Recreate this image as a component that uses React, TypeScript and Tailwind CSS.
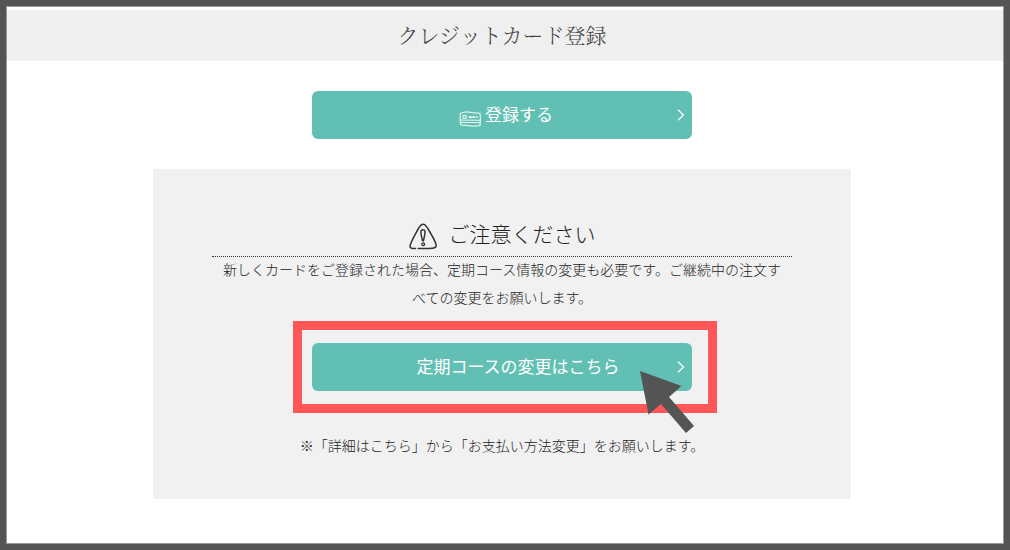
import type { ReactNode } from "react";

function CardIcon() {
  return (
    <svg className="mt-2 h-4 w-[22px]" viewBox="0 0 22 16" fill="none" stroke="currentColor" strokeWidth="1" strokeLinecap="round">
      <path d="M1.4 2.5 C3 .8 7 .8 11 1.2 C15 2 18 2.2 21 2.2 C21.5 5 21.3 10 21 14.6 C16 15.4 12 15.1 9 14.6 C6 14.2 3 14.4 1.6 13.8 C1 10 1 6 1.4 2.5Z" />
      <path d="M1.4 9 C7 9.4 14 9 21 9.3 M1.4 11.4 C7 11.8 14 11.2 21 11.7" strokeWidth=".9" />
      <path d="M4.4 4.4 H7.2 V7.2 H4.4Z" />
      <path d="M9.7 6.2 H12.7 M13.4 6.2 H16 M17.2 6.2 H18.6" strokeWidth="1.8" strokeLinecap="butt" />
    </svg>
  );
}

function WarningIcon() {
  return (
    <svg className="mt-0.5 h-7 w-7" viewBox="0 0 28 28" fill="none" stroke="#333" strokeWidth="1.5" strokeLinecap="round" strokeLinejoin="round">
      <path d="M6.5 25.6 C3.5 25.7 .9 25.5 1 23.2 C1.3 19.5 6.7 10.8 9.6 5.2 C11.3 2.3 12.7 1 14.4 1.2 C16.3 1.3 17.4 3.4 18.8 5.5 C22 10.7 26 17.4 27 21.3 C27.5 24 26.5 24.8 23.5 25.2 C19 25.8 14 25.6 9.2 25.5" />
      <path d="M11.9 8.2 C12.3 6.4 15.4 6.3 16 8.2 C16.4 11 15 14.7 14.5 17.4 C14.2 18.1 13.6 18 13.4 17.3 C12.9 14.2 11.6 11 11.9 8.2Z" />
      <circle cx="14.2" cy="21.3" r="1.4" strokeWidth="1.3" />
    </svg>
  );
}

function ActionButton({ icon, children }: { icon?: ReactNode; children: ReactNode }) {
  return (
    <button
      type="button"
      className={`relative flex h-12 w-full max-w-[380px] items-center justify-center gap-1 rounded-md bg-[#62bfb4] text-[17px] leading-6 font-normal text-white ${
        icon ? "pl-2" : "pl-8"
      }`}
    >
      {icon}
      <span className="pb-0.5">{children}</span>
      <svg className="absolute top-[18px] right-[7px] h-3 w-2" viewBox="0 0 8 12" fill="none" stroke="currentColor" strokeWidth="1.2">
        <path d="M1 .8 L6.5 6 L1 11.2" />
      </svg>
    </button>
  );
}

export default function App() {
  return (
    <div className="min-h-screen border-6 border-[#545454] bg-white font-['Noto_Sans_CJK_JP',sans-serif] text-[#222]">
      <div className="min-h-[538px] border border-[#999] pt-[3px]">
        <header className="bg-[#efefef] pt-[11px] pr-1.5 pb-[13px]">
          <h1 className="text-center font-['Noto_Serif_CJK_JP','Noto_Sans_CJK_JP',serif] text-[21px] leading-[27px] font-light text-[#444]">
            クレジットカード登録
          </h1>
        </header>

        <main className="flex flex-col items-center pt-[30px] pr-1.5">
          <ActionButton icon={<CardIcon />}>登録する</ActionButton>

          <section className="mt-[30px] flex w-full max-w-[698px] flex-col items-center bg-[#f1f1f1] px-4 pt-12 pb-10 text-sm leading-7">
            <h2 className="flex w-full max-w-[580px] items-start justify-center gap-3 border-b border-dotted border-[#333] pt-1 pb-[5px] text-[21px] leading-6 font-light">
              <WarningIcon />
              <span>ご注意ください</span>
            </h2>
            <p className="-mt-0.5 w-full max-w-[580px] px-2 text-center font-light">
              新しくカードをご登録された場合、定期コース情報の変更も必要です。ご継続中の注文すべての変更をお願いします。
            </p>

            <div className="relative mt-8 w-full max-w-[380px]">
              <ActionButton>定期コースの変更はこちら</ActionButton>
              {/* highlight frame and pointer over the button */}
              <div className="pointer-events-none absolute -top-[22px] -right-[25px] -bottom-[22px] -left-[19px] border-9 border-[#ff5757]" />
              <svg className="pointer-events-none absolute top-7 -right-0.5 h-[62px] w-[54px]" viewBox="0 0 54 62" fill="#545454">
                <path d="M0 0 L41.5 15 L29 26 L54 55 L46 62 L21 33 L8.5 43.5Z" />
              </svg>
            </div>

            <p className="mt-10 text-center font-light">※「詳細はこちら」から「お支払い方法変更」をお願いします。</p>
          </section>
        </main>
      </div>
    </div>
  );
}
